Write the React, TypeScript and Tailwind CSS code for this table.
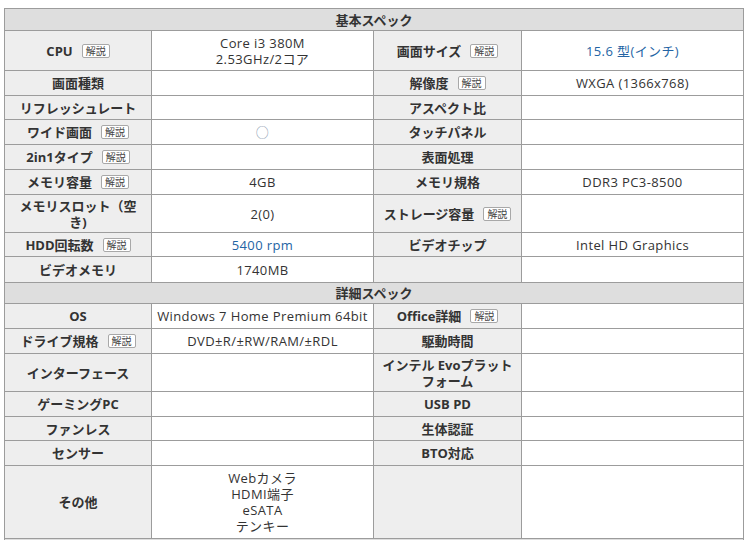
import React from 'react';

type Cell = {
  label: React.ReactNode;
  hint?: boolean;
  value?: string[];
  blue?: boolean;
};

type Row = { left: Cell; right: Cell; h: string };

const basicSpecs: Row[] = [
  {
    left: { label: 'CPU', hint: true, value: ['Core i3 380M', '2.53GHz/2コア'] },
    right: { label: '画面サイズ', hint: true, value: ['15.6 型(インチ)'], blue: true },
    h: 'h-[40px]',
  },
  { left: { label: '画面種類' }, right: { label: '解像度', hint: true, value: ['WXGA (1366x768)'] }, h: 'h-[25px]' },
  { left: { label: 'リフレッシュレート' }, right: { label: 'アスペクト比' }, h: 'h-[24px]' },
  {
    left: { label: 'ワイド画面', hint: true, value: ['○'] },
    right: { label: 'タッチパネル' },
    h: 'h-[25px]',
  },
  { left: { label: '2in1タイプ', hint: true }, right: { label: '表面処理' }, h: 'h-[25px]' },
  {
    left: { label: 'メモリ容量', hint: true, value: ['4GB'] },
    right: { label: 'メモリ規格', value: ['DDR3 PC3-8500'] },
    h: 'h-[25px]',
  },
  {
    left: { label: <>メモリスロット（空<br />き)</>, value: ['2(0)'] },
    right: { label: 'ストレージ容量', hint: true },
    h: 'h-[38px]',
  },
  {
    left: { label: 'HDD回転数', hint: true, value: ['5400 rpm'], blue: true },
    right: { label: 'ビデオチップ', value: ['Intel HD Graphics'] },
    h: 'h-[24px]',
  },
  { left: { label: 'ビデオメモリ', value: ['1740MB'] }, right: { label: '' }, h: 'h-[26px]' },
];

const detailSpecs: Row[] = [
  {
    left: { label: 'OS', value: ['Windows 7 Home Premium 64bit'] },
    right: { label: 'Office詳細', hint: true },
    h: 'h-[25px]',
  },
  {
    left: { label: 'ドライブ規格', hint: true, value: ['DVD±R/±RW/RAM/±RDL'] },
    right: { label: '駆動時間' },
    h: 'h-[25px]',
  },
  {
    left: { label: 'インターフェース' },
    right: { label: <>インテル Evoプラット<br />フォーム</> },
    h: 'h-[38px]',
  },
  { left: { label: 'ゲーミングPC' }, right: { label: 'USB PD' }, h: 'h-[25px]' },
  { left: { label: 'ファンレス' }, right: { label: '生体認証' }, h: 'h-[24px]' },
  { left: { label: 'センサー' }, right: { label: 'BTO対応' }, h: 'h-[25px]' },
  {
    left: { label: 'その他', value: ['Webカメラ', 'HDMI端子', 'eSATA', 'テンキー'] },
    right: { label: '' },
    h: 'h-[73px]',
  },
];

function Hint() {
  return (
    <span className="inline-block border border-[#a8a8a8] rounded-[2px] bg-white px-[3px] text-[10px] leading-[12px] font-normal tracking-normal text-[#444]">
      解説
    </span>
  );
}

function SectionHeader({ title, h }: { title: string; h: string }) {
  return (
    <div
      className={`col-span-4 flex items-center justify-center border-r border-b border-[#9c9c9c] bg-[#dedede] font-bold text-[13px] leading-4 text-[#333] ${h}`}
    >
      {title}
    </div>
  );
}

function SpecRow({ row }: { row: Row }) {
  const labelCls = `flex items-center justify-center gap-[9px] border-r border-b border-[#9c9c9c] bg-[#eeeeee] px-1 text-center font-bold text-[#333] ${row.h}`;
  const valueCls = `flex flex-col items-center justify-center border-r border-b border-[#9c9c9c] bg-white px-1 text-center tracking-[0.4px] ${row.h}`;
  return (
    <>
      {[row.left, row.right].map((c, i) => (
        <React.Fragment key={i}>
          <div className={labelCls}>
            <span>{c.label}</span>
            {c.hint && <Hint />}
          </div>
          <div className={valueCls}>
            {c.value?.map((line, j) => (
              <div
                key={j}
                className={`h-4 leading-4 ${
                  line === '○' ? 'text-[#8a9aae]' : c.blue ? 'text-[#2464a4]' : 'text-[#333]'
                }`}
              >
                {line}
              </div>
            ))}
          </div>
        </React.Fragment>
      ))}
    </>
  );
}

export default function App() {
  return (
    <div
      className="w-[747px] h-[540px] overflow-hidden bg-white pt-2 pl-1 text-[13px] leading-4"
      style={{ fontFamily: '"Open Sans", "Noto Sans CJK JP", sans-serif' }}
    >
      <div className="grid w-[740px] grid-cols-[147px_222px_148px_222px] border-l border-t border-[#9c9c9c]">
        <SectionHeader title="基本スペック" h="h-[22px]" />
        {basicSpecs.map((r, i) => (
          <SpecRow key={i} row={r} />
        ))}
        <SectionHeader title="詳細スペック" h="h-[21px]" />
        {detailSpecs.map((r, i) => (
          <SpecRow key={i} row={r} />
        ))}
        <SectionHeader title="" h="h-[22px]" />
      </div>
    </div>
  );
}
